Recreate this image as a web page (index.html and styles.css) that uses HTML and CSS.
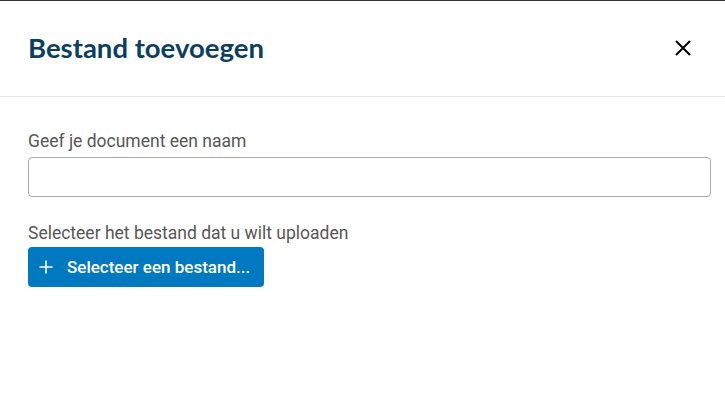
FILE: index.html
```html
<!DOCTYPE html>
<html lang="nl">
<head>
<meta charset="utf-8">
<link rel="stylesheet" href="styles.css">
</head>
<body>
<div class="dialog">
  <header class="dialog-header">
    <h1 class="dialog-title">Bestand toevoegen</h1>
    <button class="close-btn" aria-label="Sluiten">
      <svg width="16" height="16" viewBox="0 0 16 16"><path d="M1 1 L15 15 M15 1 L1 15" stroke="#000" stroke-width="2" fill="none"/></svg>
    </button>
  </header>
  <div class="dialog-body">
    <label class="field-label" for="docname">Geef je document een naam</label>
    <input class="text-input" id="docname" type="text">
    <div class="field-label upload-label">Selecteer het bestand dat u wilt uploaden</div>
    <button class="select-btn">
      <svg width="14" height="14" viewBox="0 0 14 14"><path d="M7 0.5 V13.5 M0.5 7 H13.5" stroke="#fff" stroke-width="1.6" fill="none"/></svg>
      <span>Selecteer een bestand...</span>
    </button>
  </div>
</div>
</body>
</html>
```
FILE: styles.css
```css
html, body {
  margin: 0;
  padding: 0;
  background: #fff;
}
body {
  width: 725px;
  height: 414px;
  overflow: hidden;
  font-family: Roboto, "Liberation Sans", sans-serif;
}
.dialog {
  border-top: 1px solid #333;
  height: 413px;
  background: #fff;
}
.dialog-header {
  height: 95px;
  border-bottom: 1px solid #e6e6e6;
  display: flex;
  align-items: center;
  justify-content: space-between;
  padding: 0 30px 0 28px;
}
.dialog-title {
  margin: 0;
  font-family: Lato, "Liberation Sans", sans-serif;
  font-weight: 700;
  font-size: 27.5px;
  color: #0b3f62;
  padding-bottom: 3px;
}
.close-btn {
  width: 24px;
  height: 24px;
  border: 0;
  padding: 0;
  background: none;
  display: flex;
  align-items: center;
  justify-content: center;
  margin-bottom: 2px;
}
.dialog-body {
  padding: 32px 14px 0 28px;
  display: flex;
  flex-direction: column;
  align-items: flex-start;
}
.field-label {
  font-size: 17.5px;
  line-height: 24px;
  color: #575757;
}
.text-input {
  box-sizing: border-box;
  width: 683px;
  height: 40px;
  margin-top: 4px;
  border: 1px solid #a9a9a9;
  border-radius: 4px;
  font-family: inherit;
  font-size: 16px;
  padding: 0 10px;
  outline: none;
}
.upload-label {
  margin-top: 24px;
}
.select-btn {
  margin-top: 2px;
  box-sizing: border-box;
  height: 40px;
  width: 236px;
  background: #0079c1;
  border: 0;
  border-radius: 4px;
  color: #fff;
  font-family: Roboto, "Liberation Sans", sans-serif;
  font-weight: 500;
  font-size: 17px;
  display: flex;
  align-items: center;
  gap: 14px;
  padding: 0 0 0 11px;
}
.select-btn svg {
  flex: none;
}
```
